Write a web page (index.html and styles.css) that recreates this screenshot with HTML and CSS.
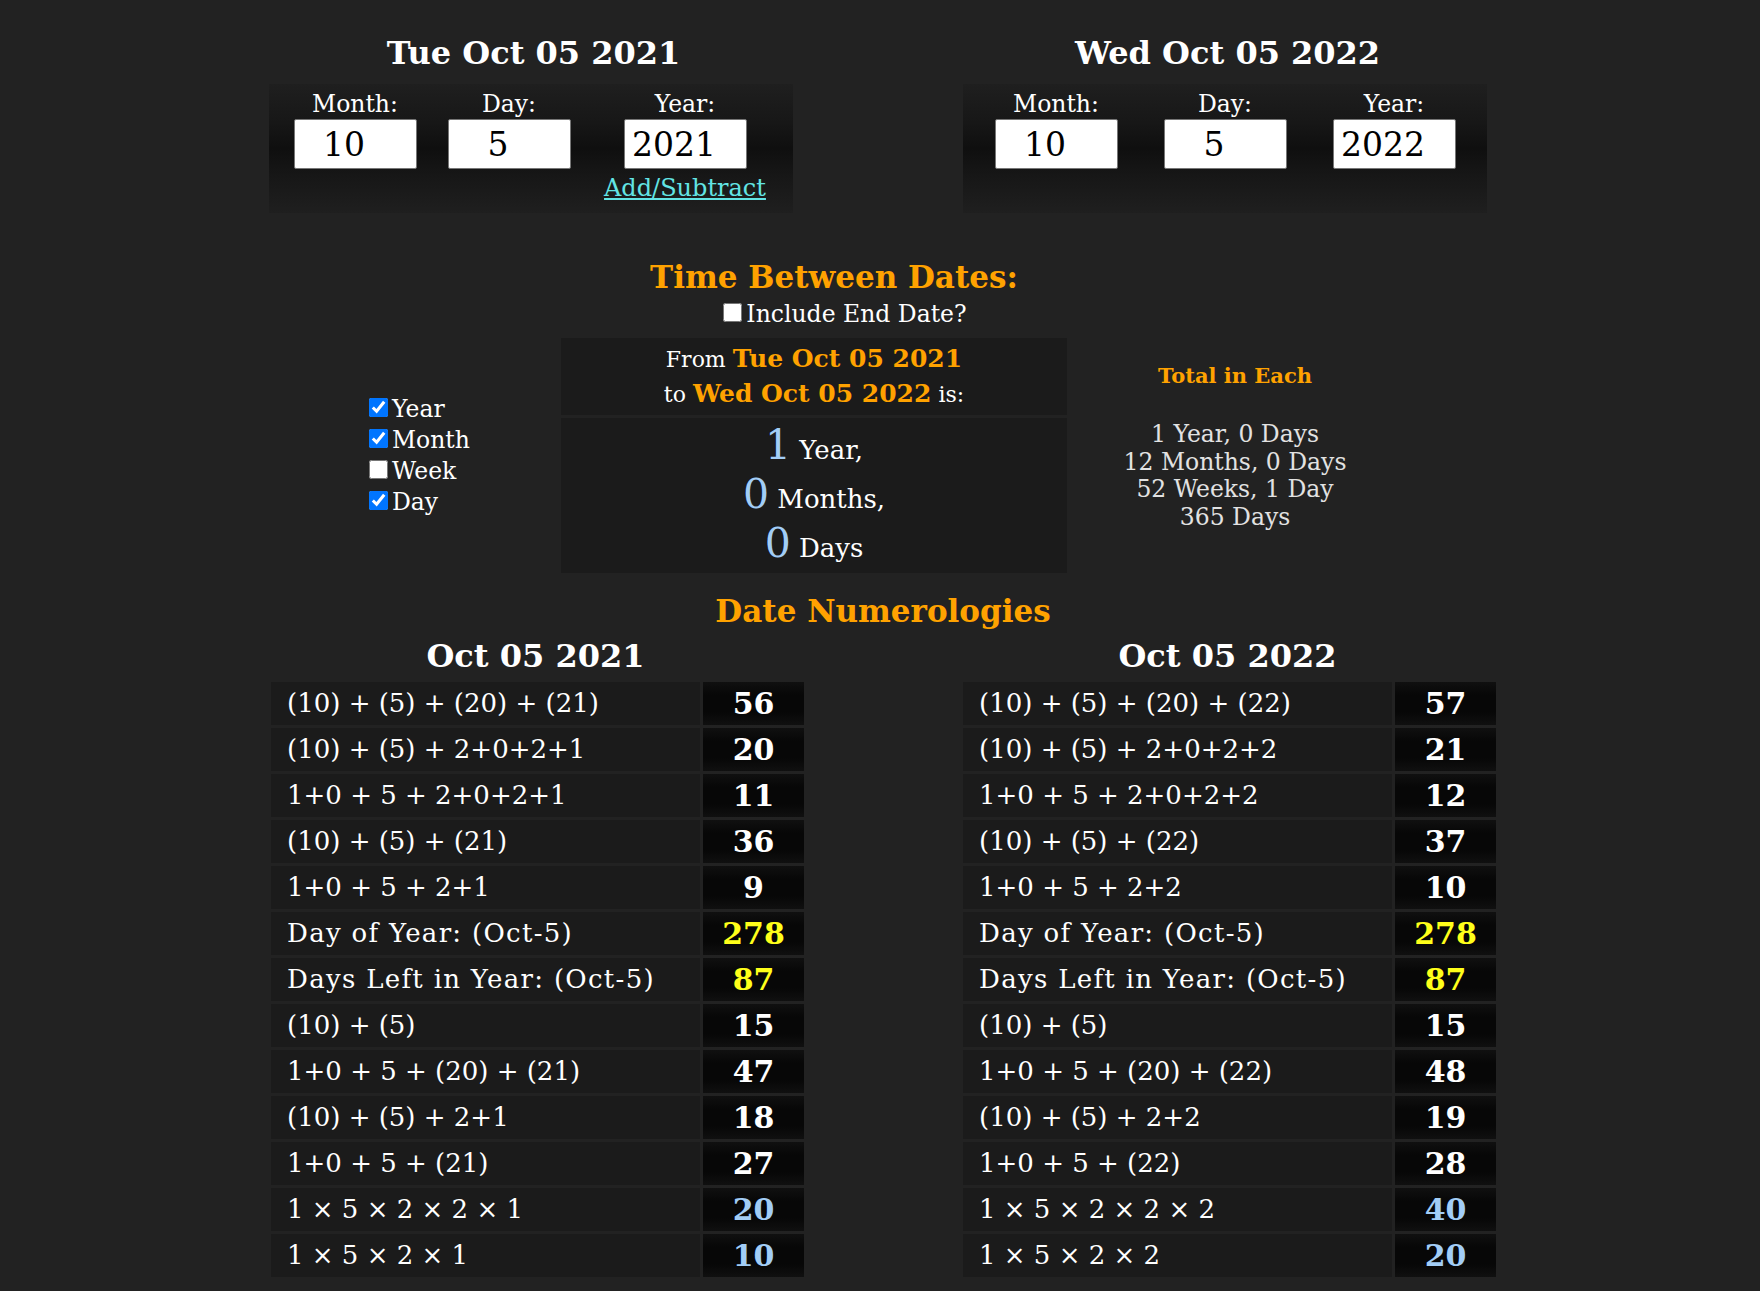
FILE: index.html
```html
<!DOCTYPE html>
<html lang="en">
<head>
<meta charset="utf-8">
<title>Time Between Dates</title>
<link rel="stylesheet" href="styles.css">
</head>
<body>
<div class="dates">
  <div class="date-col">
    <h2 class="date-title">Tue Oct 05 2021</h2>
    <div class="panel panel-left">
      <div class="field"><label>Month:</label><input class="num" type="text" value="10"></div>
      <div class="field"><label>Day:</label><input class="num" type="text" value="5"></div>
      <div class="field"><label>Year:</label><input class="num" type="text" value="2021"><a class="addsub" href="#">Add/Subtract</a></div>
    </div>
  </div>
  <div class="date-col">
    <h2 class="date-title">Wed Oct 05 2022</h2>
    <div class="panel panel-right">
      <div class="field"><label>Month:</label><input class="num" type="text" value="10"></div>
      <div class="field"><label>Day:</label><input class="num" type="text" value="5"></div>
      <div class="field"><label>Year:</label><input class="num" type="text" value="2022"></div>
    </div>
  </div>
</div>

<div class="tbd-head">
  <h2 class="orange-title">Time Between Dates:</h2>
  <div class="include"><input type="checkbox" class="cb">Include End Date?</div>
</div>

<div class="results">
  <div class="units">
    <label class="unit"><input type="checkbox" class="cb" checked>Year</label>
    <label class="unit"><input type="checkbox" class="cb" checked>Month</label>
    <label class="unit"><input type="checkbox" class="cb">Week</label>
    <label class="unit"><input type="checkbox" class="cb" checked>Day</label>
  </div>
  <div class="mid">
    <div class="fromto">
      From <span class="od">Tue Oct 05 2021</span><br>
      to <span class="od">Wed Oct 05 2022</span> is:
    </div>
    <div class="diff">
      <div class="diff-line"><span class="big">1</span> Year,</div>
      <div class="diff-line"><span class="big">0</span> Months,</div>
      <div class="diff-line"><span class="big">0</span> Days</div>
    </div>
  </div>
  <div class="totals">
    <div class="totals-title">Total in Each</div>
    <div class="totals-list">
      <div>1 Year, 0 Days</div>
      <div>12 Months, 0 Days</div>
      <div>52 Weeks, 1 Day</div>
      <div>365 Days</div>
    </div>
  </div>
</div>

<h2 class="orange-title numer-title">Date Numerologies</h2>

<div class="numer">
  <div class="ncol">
    <h2 class="ncol-title">Oct 05 2021</h2>
    <div class="ntable">
      <div class="f">(10) + (5) + (20) + (21)</div><div class="v">56</div>
      <div class="f">(10) + (5) + 2+0+2+1</div><div class="v">20</div>
      <div class="f">1+0 + 5 + 2+0+2+1</div><div class="v">11</div>
      <div class="f">(10) + (5) + (21)</div><div class="v">36</div>
      <div class="f">1+0 + 5 + 2+1</div><div class="v">9</div>
      <div class="f words">Day of Year: (Oct-5)</div><div class="v yellow">278</div>
      <div class="f words">Days Left in Year: (Oct-5)</div><div class="v yellow">87</div>
      <div class="f">(10) + (5)</div><div class="v">15</div>
      <div class="f">1+0 + 5 + (20) + (21)</div><div class="v">47</div>
      <div class="f">(10) + (5) + 2+1</div><div class="v">18</div>
      <div class="f">1+0 + 5 + (21)</div><div class="v">27</div>
      <div class="f">1 × 5 × 2 × 2 × 1</div><div class="v blue">20</div>
      <div class="f">1 × 5 × 2 × 1</div><div class="v blue">10</div>
    </div>
  </div>
  <div class="ncol">
    <h2 class="ncol-title">Oct 05 2022</h2>
    <div class="ntable">
      <div class="f">(10) + (5) + (20) + (22)</div><div class="v">57</div>
      <div class="f">(10) + (5) + 2+0+2+2</div><div class="v">21</div>
      <div class="f">1+0 + 5 + 2+0+2+2</div><div class="v">12</div>
      <div class="f">(10) + (5) + (22)</div><div class="v">37</div>
      <div class="f">1+0 + 5 + 2+2</div><div class="v">10</div>
      <div class="f words">Day of Year: (Oct-5)</div><div class="v yellow">278</div>
      <div class="f words">Days Left in Year: (Oct-5)</div><div class="v yellow">87</div>
      <div class="f">(10) + (5)</div><div class="v">15</div>
      <div class="f">1+0 + 5 + (20) + (22)</div><div class="v">48</div>
      <div class="f">(10) + (5) + 2+2</div><div class="v">19</div>
      <div class="f">1+0 + 5 + (22)</div><div class="v">28</div>
      <div class="f">1 × 5 × 2 × 2 × 2</div><div class="v blue">40</div>
      <div class="f">1 × 5 × 2 × 2</div><div class="v blue">20</div>
    </div>
  </div>
</div>
</body>
</html>
```

FILE: styles.css
```css
html, body {
  margin: 0;
  padding: 0;
  background: #222222;
}
body {
  font-family: "DejaVu Serif", serif;
  color: #ffffff;
  font-size: 23.5px;
  line-height: 28px;
  padding-top: 35px;
  padding-bottom: 14px;
}
h2 {
  margin: 0;
  font-size: 31px;
  line-height: 36px;
  font-weight: bold;
}

/* ---------- date pickers ---------- */
.dates {
  display: flex;
  justify-content: center;
  gap: 170px;
  padding-right: 4px;
}
.date-col {
  width: 524px;
}
.date-title {
  text-align: center;
  color: #ffffff;
  padding-left: 5px;
  font-size: 32px;
}
.panel {
  margin-top: 13px;
  height: 129px;
  box-sizing: border-box;
  padding-top: 6px;
  display: grid;
  justify-content: center;
  align-items: start;
  background: linear-gradient(to bottom, #1f1f1f 0%, #171717 30%, #0f0f0f 50%, #171717 72%, #1f1f1f 100%);
}
.panel-left {
  grid-template-columns: 154px 154px 198px;
}
.panel-right {
  grid-template-columns: 169px 169px 169px;
}
.field {
  display: flex;
  flex-direction: column;
  align-items: center;
}
.field label {
  display: block;
  line-height: 28px;
  height: 29px;
}
.num {
  box-sizing: border-box;
  width: 123px;
  height: 50px;
  margin: 0;
  padding: 0 24px 0 2px;
  border: 1px solid #767676;
  border-radius: 2px;
  background: #ffffff;
  color: #000000;
  font-family: "DejaVu Serif", serif;
  font-size: 33px;
  text-align: center;
  outline: none;
}
.addsub {
  margin-top: 5px;
  font-size: 24px;
  line-height: 28px;
  color: #62e4e4;
  text-decoration: underline;
}

/* ---------- time between ---------- */
.tbd-head {
  margin-top: 46px;
  text-align: center;
  padding-right: 92px;
}
.orange-title {
  color: #ffa200;
}
.include {
  margin-top: 5px;
  padding-left: 22px;
}
.cb {
  width: 19px;
  height: 19px;
  margin: 0 4px 1px 0;
  vertical-align: baseline;
}
.results {
  margin-top: 10px;
  display: grid;
  grid-template-columns: 204px 506px 336px;
  justify-content: center;
}
.units {
  align-self: center;
  padding-left: 12px;
  padding-top: 1px;
  display: flex;
  flex-direction: column;
}
.unit {
  line-height: 31px;
}
.mid {
  display: flex;
  flex-direction: column;
  gap: 3px;
}
.fromto {
  background: #1b1b1b;
  text-align: center;
  font-size: 22px;
  line-height: 34px;
  padding: 4px 0 3px;
}
.od {
  color: #ffa200;
  font-weight: bold;
  font-size: 25px;
}
.diff {
  background: #1b1b1b;
  text-align: center;
  font-size: 26px;
  padding: 8px 0 0;
}
.diff-line {
  height: 49px;
  line-height: 49px;
}
.big {
  font-size: 41px;
  line-height: 30px;
  color: #a2cdf6;
}
.totals {
  text-align: center;
  padding-top: 25px;
}
.totals-title {
  color: #ffa200;
  font-weight: bold;
  font-size: 21px;
  line-height: 26px;
}
.totals-list {
  margin-top: 32px;
  color: #e2e2e2;
  line-height: 27.7px;
}

/* ---------- numerologies ---------- */
.numer-title {
  margin-top: 20px;
  text-align: center;
  padding-left: 6px;
}
.numer {
  margin-top: 9px;
  display: flex;
  justify-content: center;
  gap: 159px;
  padding-left: 7px;
}
.ncol {
  width: 533px;
}
.ncol-title {
  text-align: center;
  padding-right: 4px;
  margin-bottom: 8px;
  font-size: 32px;
}
.ntable {
  display: grid;
  grid-template-columns: 429px 101px;
  grid-auto-rows: 43px;
  gap: 3px;
}
.f {
  background: #1b1b1b;
  padding-left: 16px;
  font-size: 26px;
  line-height: 43px;
  white-space: nowrap;
}
.f.words {
  letter-spacing: 1.3px;
}
.v {
  background: linear-gradient(to bottom, #101010 0%, #070707 30%, #070707 70%, #101010 100%);
  text-align: center;
  font-size: 30px;
  font-weight: bold;
  line-height: 43px;
}
.v.yellow {
  color: #ffff1a;
}
.v.blue {
  color: #a2cdf6;
}
```
